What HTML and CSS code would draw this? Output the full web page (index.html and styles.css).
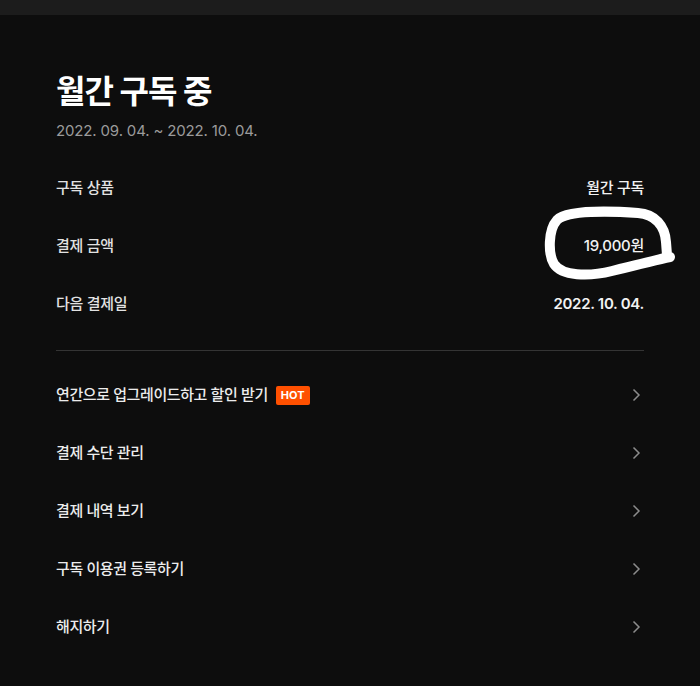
FILE: index.html
```html
<!DOCTYPE html>
<html lang="ko">
<head>
<meta charset="utf-8">
<title>월간 구독 중</title>
<link rel="stylesheet" href="styles.css">
</head>
<body>
<div class="topbar"></div>
<main class="page">
  <h1 class="title">월간 구독 중</h1>
  <p class="period">2022. 09. 04. ~ 2022. 10. 04.</p>
  <dl class="info">
    <div class="info-row"><dt>구독 상품</dt><dd>월간 구독</dd></div>
    <div class="info-row"><dt>결제 금액</dt><dd>19,000원</dd></div>
    <div class="info-row"><dt>다음 결제일</dt><dd class="strong">2022. 10. 04.</dd></div>
  </dl>
  <div class="divider"></div>
  <ul class="menu">
    <li class="menu-item"><span class="menu-label">연간으로 업그레이드하고 할인 받기 <span class="badge">HOT</span></span><svg class="chev" width="9" height="14" viewBox="0 0 9 14"><path d="M1.5 1.5 L7 7 L1.5 12.5" fill="none" stroke="#8c8c8c" stroke-width="1.5"/></svg></li>
    <li class="menu-item"><span class="menu-label">결제 수단 관리</span><svg class="chev" width="9" height="14" viewBox="0 0 9 14"><path d="M1.5 1.5 L7 7 L1.5 12.5" fill="none" stroke="#8c8c8c" stroke-width="1.5"/></svg></li>
    <li class="menu-item"><span class="menu-label">결제 내역 보기</span><svg class="chev" width="9" height="14" viewBox="0 0 9 14"><path d="M1.5 1.5 L7 7 L1.5 12.5" fill="none" stroke="#8c8c8c" stroke-width="1.5"/></svg></li>
    <li class="menu-item"><span class="menu-label">구독 이용권 등록하기</span><svg class="chev" width="9" height="14" viewBox="0 0 9 14"><path d="M1.5 1.5 L7 7 L1.5 12.5" fill="none" stroke="#8c8c8c" stroke-width="1.5"/></svg></li>
    <li class="menu-item"><span class="menu-label">해지하기</span><svg class="chev" width="9" height="14" viewBox="0 0 9 14"><path d="M1.5 1.5 L7 7 L1.5 12.5" fill="none" stroke="#8c8c8c" stroke-width="1.5"/></svg></li>
  </ul>
  <svg class="annotation" width="700" height="686" viewBox="0 0 700 686">
    <path d="M670 257 C656 260 636 265 612 271 C588 277 562 276 554 264 C548 254 548 230 557 220 C567 210 610 211 638 213 C655 214 665 226 666 242 L667 255" fill="none" stroke="#fff" stroke-width="10" stroke-linecap="round" stroke-linejoin="round"/>
  </svg>
</main>
</body>
</html>
```

FILE: styles.css
```css
* { box-sizing: border-box; }
html, body {
  margin: 0;
  padding: 0;
  background: #0d0d0d;
}
body {
  font-family: "Inter", "Noto Sans CJK KR", sans-serif;
  color: #f2f2f2;
  height: 686px;
  overflow: hidden;
}
.topbar {
  height: 15px;
  background: #1c1c1c;
}
.page {
  padding: 55px 56px 0;
}
.title {
  margin: 0;
  font-size: 32px;
  line-height: 44px;
  font-weight: 700;
  color: #ffffff;
  letter-spacing: -1px;
}
.period {
  margin: 6px 0 0;
  font-size: 15px;
  line-height: 22px;
  color: #9b9b9b;
  letter-spacing: -0.15px;
}
.info {
  margin: 17px 0 0;
  display: flex;
  flex-direction: column;
}
.info-row {
  display: flex;
  justify-content: space-between;
  align-items: center;
  height: 58px;
  font-size: 15px;
  line-height: 22px;
  letter-spacing: -0.3px;
}
.info-row dt {
  color: #e2e2e2;
  font-weight: 500;
}
.info-row dd {
  margin: 0;
  color: #f2f2f2;
  font-weight: 500;
}
.info-row dd.strong { font-weight: 600; }
.divider {
  margin-top: 17px;
  height: 1px;
  background: #343434;
}
.menu {
  list-style: none;
  margin: 15px 0 0;
  padding: 0;
}
.menu-item {
  display: flex;
  justify-content: space-between;
  align-items: center;
  height: 58px;
  font-size: 15px;
  line-height: 22px;
  font-weight: 500;
  color: #ececec;
  letter-spacing: -0.4px;
}
.menu-label {
  display: flex;
  align-items: center;
  gap: 8px;
}
.badge {
  display: inline-block;
  background: #ff5000;
  color: #fff;
  font-size: 11px;
  line-height: 19px;
  font-weight: 700;
  padding: 0 5px;
  border-radius: 2px;
  letter-spacing: 0;
}
.chev { margin-right: 3px; }
.annotation {
  position: absolute;
  left: 0;
  top: 0;
  pointer-events: none;
}
```
